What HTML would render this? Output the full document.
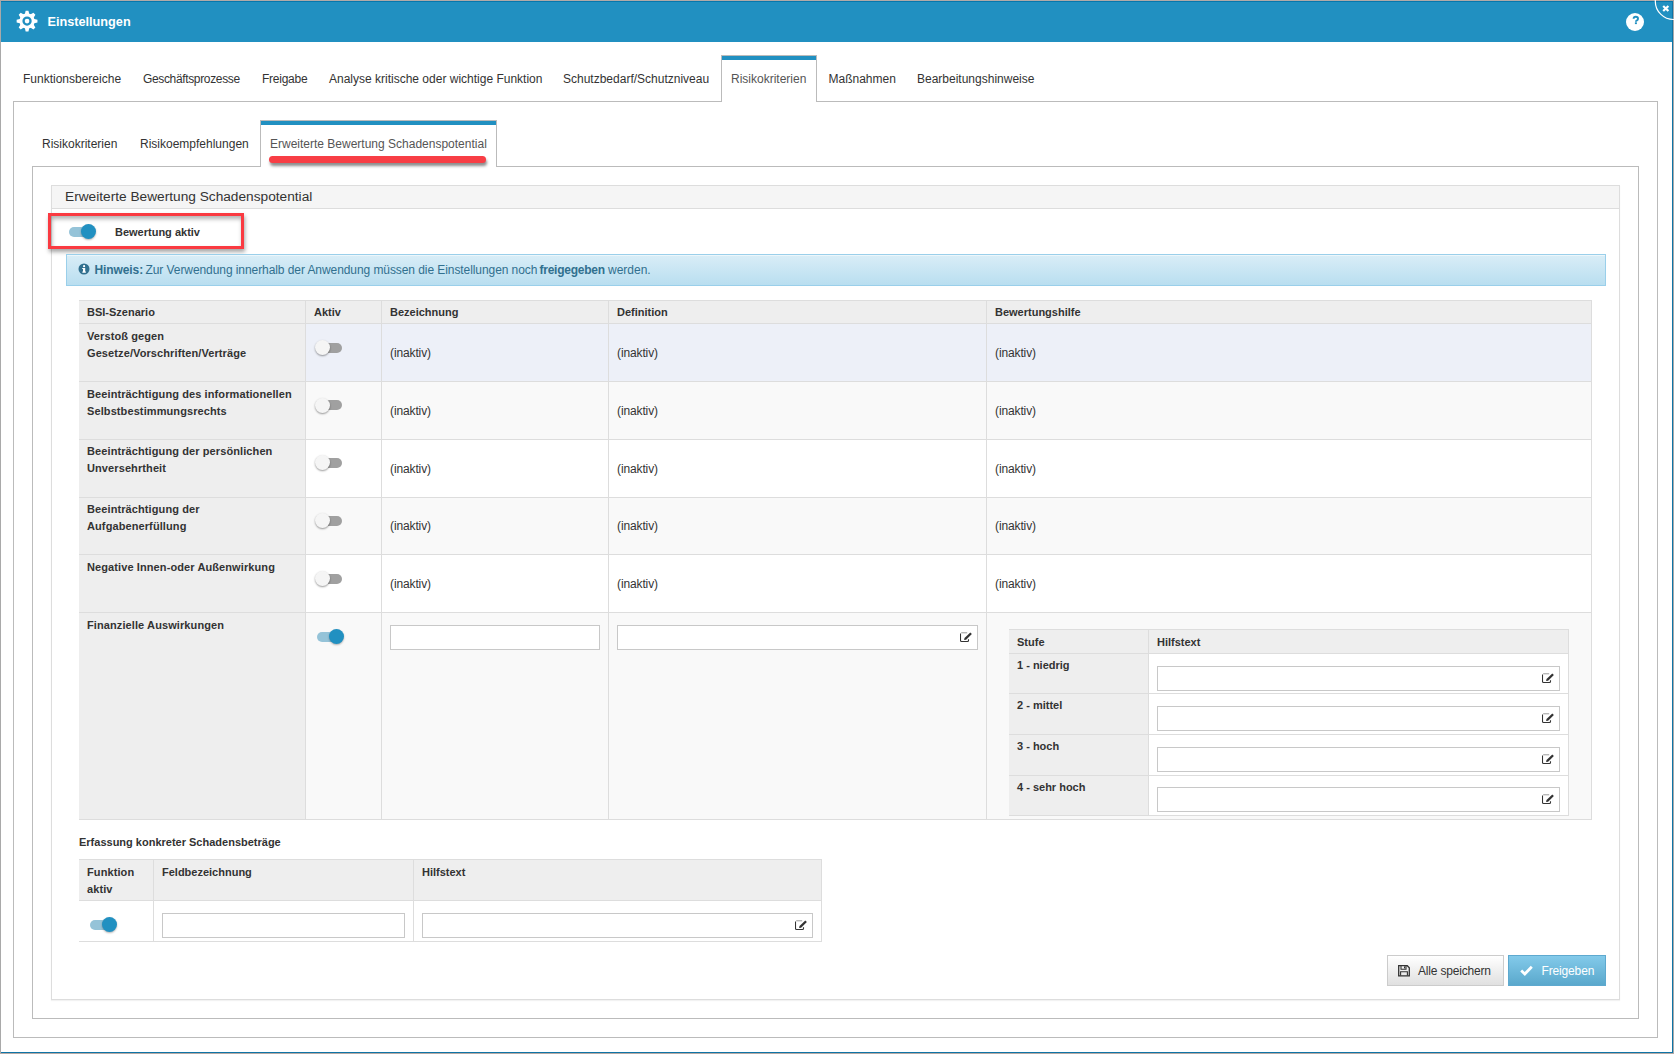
<!DOCTYPE html>
<html><head><meta charset="utf-8">
<style>
*{box-sizing:border-box;margin:0;padding:0}
html,body{width:1674px;height:1054px;overflow:hidden;background:#fff}
body{position:relative;font-family:"Liberation Sans",sans-serif;color:#333}
.a{position:absolute}
.t{position:absolute;white-space:nowrap;line-height:20px;font-size:12px}
.b{font-weight:700;font-size:11px}
.lh{line-height:17px}
.box{position:absolute;border:1px solid #bbb}
.inp{position:absolute;background:#fff;border:1px solid #c8c8c8}
.tg{position:absolute;width:30px;height:15px}
.tg .tr{position:absolute;left:3px;top:2.5px;width:24px;height:10px;border-radius:5px}
.tg .kn{position:absolute;top:0;width:15px;height:15px;border-radius:50%}
.tg.off .tr{background:#a0a0a0}
.tg.off .kn{left:0;background:#f5f5f5;box-shadow:0 1px 2px rgba(0,0,0,.4)}
.tg.on .tr{background:#95c3d8}
.tg.on .kn{left:15px;background:#2190c1;box-shadow:0 1px 2px rgba(0,0,0,.3)}
.ed{position:absolute;width:13px;height:11px}
</style></head><body>

<!-- window frame -->
<div class="a" style="left:0;top:0;width:1674px;height:1px;background:#b2aaa8"></div>
<div class="a" style="left:0;top:0;width:1px;height:1054px;background:#a9a9a9"></div>
<div class="a" style="left:1673px;top:0;width:1px;height:1054px;background:#a9a9a9"></div>
<div class="a" style="left:0;top:1053px;width:1674px;height:1px;background:#b4aaa6"></div>
<div class="a" style="left:1px;top:1px;width:1672px;height:41px;background:#2190c1"></div>
<div class="a" style="left:1px;top:1px;width:1672px;height:1px;background:#0777ac"></div>
<div class="a" style="left:1672px;top:1px;width:1px;height:1052px;background:#0f74a6"></div>
<div class="a" style="left:1px;top:1052px;width:1672px;height:1px;background:#0f74a6"></div>

<!-- header -->
<svg class="a" style="left:14px;top:8px" width="26" height="26" viewBox="0 0 26 26">
 <g transform="translate(13.05,13.05)">
  <path d="M-2.15 -7.30 L-1.40 -10.40 L1.40 -10.40 L2.15 -7.30 L3.64 -6.68 L6.36 -8.34 L8.34 -6.36 L6.68 -3.64 L7.30 -2.15 L10.40 -1.40 L10.40 1.40 L7.30 2.15 L6.68 3.64 L8.34 6.36 L6.36 8.34 L3.64 6.68 L2.15 7.30 L1.40 10.40 L-1.40 10.40 L-2.15 7.30 L-3.64 6.68 L-6.36 8.34 L-8.34 6.36 L-6.68 3.64 L-7.30 2.15 L-10.40 1.40 L-10.40 -1.40 L-7.30 -2.15 L-6.68 -3.64 L-8.34 -6.36 L-6.36 -8.34 L-3.64 -6.68Z" fill="#fff"/>
  <circle r="7.5" fill="#fff"/>
  <circle r="3.5" fill="none" stroke="#2190c1" stroke-width="2.3"/>
 </g>
</svg>
<div class="t" style="left:47.5px;top:12px;color:#fff;font-weight:700;font-size:12.7px">Einstellungen</div>
<div class="a" style="left:1626px;top:12.5px;width:18px;height:18px;border-radius:50%;background:#fff"></div>
<svg class="a" style="left:1630px;top:14px" width="12" height="12" viewBox="0 0 12 12"><path d="M3.6 4.8 Q3.6 2.8 5.8 2.8 Q8 2.8 8 4.7 Q8 5.7 6.9 6.3 Q5.9 6.8 5.9 7.7" fill="none" stroke="#2190c1" stroke-width="1.9"/><rect x="4.9" y="8.3" width="2" height="1.8" fill="#2190c1"/></svg>
<svg class="a" style="left:1650px;top:0" width="24" height="24" viewBox="0 0 24 24">
 <circle cx="23.6" cy="1.2" r="18.3" fill="none" stroke="#fff" stroke-width="1.2"/>
 <path d="M13.2 6 L18.4 11 M18.4 6 L13.2 11" stroke="#fff" stroke-width="2.2"/>
</svg>

<!-- level 1 tabs -->
<div class="box" style="left:13px;top:101px;width:1645px;height:937px"></div>
<div class="a" style="left:721px;top:55px;width:96px;height:47px;background:#fff;border:1px solid #bbb;border-bottom:none"></div>
<div class="a" style="left:722px;top:56px;width:94px;height:4px;background:#2190c1"></div>
<div class="t" style="left:23px;top:69px">Funktionsbereiche</div>
<div class="t" style="left:143px;top:69px;letter-spacing:-0.35px">Geschäftsprozesse</div>
<div class="t" style="left:262px;top:69px;letter-spacing:-0.25px">Freigabe</div>
<div class="t" style="left:329px;top:69px">Analyse kritische oder wichtige Funktion</div>
<div class="t" style="left:563px;top:69px">Schutzbedarf/Schutzniveau</div>
<div class="t" style="left:731px;top:69px;color:#555">Risikokriterien</div>
<div class="t" style="left:828.5px;top:69px">Maßnahmen</div>
<div class="t" style="left:917px;top:69px">Bearbeitungshinweise</div>

<!-- level 2 tabs -->
<div class="box" style="left:32px;top:166px;width:1607px;height:853px"></div>
<div class="a" style="left:260px;top:120px;width:237px;height:47px;background:#fff;border:1px solid #bbb;border-bottom:none"></div>
<div class="a" style="left:261px;top:121px;width:235px;height:4px;background:#2190c1"></div>
<div class="t" style="left:42px;top:134px">Risikokriterien</div>
<div class="t" style="left:140px;top:134px">Risikoempfehlungen</div>
<div class="t" style="left:270px;top:134px;color:#555">Erweiterte Bewertung Schadenspotential</div>
<div class="a" style="left:269px;top:156px;width:217px;height:7px;border-radius:4px;background:#f83e45;box-shadow:1px 3px 3px rgba(0,0,0,.45)"></div>

<!-- inner panel -->
<div class="a" style="left:51px;top:185px;width:1569px;height:815px;border:1px solid #ddd;box-shadow:0 1px 1px rgba(0,0,0,.05)"></div>
<div class="a" style="left:52px;top:186px;width:1567px;height:23px;background:#f5f5f5;border-bottom:1px solid #ddd"></div>
<div class="t" style="left:65px;top:187px;font-size:13.7px">Erweiterte Bewertung Schadenspotential</div>

<!-- red box -->
<div class="a" style="left:48px;top:213px;width:196px;height:36px;border:3px solid #fa3a41;box-shadow:1px 3px 4px rgba(0,0,0,.35), inset 1px 3px 4px rgba(0,0,0,.3)"></div>
<div class="tg on" style="left:65.5px;top:224px"><div class="tr"></div><div class="kn"></div></div>
<div class="t b" style="left:115px;top:222px">Bewertung aktiv</div>

<!-- alert -->
<div class="a" style="left:66px;top:254px;width:1540px;height:32px;border:1px solid #9acfea;background:linear-gradient(#d9edf7,#b9def0);box-shadow:inset 0 1px 0 rgba(255,255,255,.5)"></div>
<svg class="a" style="left:78px;top:263px" width="12" height="12" viewBox="0 0 12 12">
 <circle cx="6" cy="6" r="5.5" fill="#31708f"/>
 <rect x="5" y="5" width="2.2" height="4.4" fill="#fff"/>
 <rect x="4.2" y="5" width="1.2" height="1" fill="#fff"/>
 <rect x="4.2" y="8.6" width="3.8" height="1" fill="#fff"/>
 <circle cx="6.1" cy="3.2" r="1.1" fill="#fff"/>
</svg>
<div class="t b" style="left:94.5px;top:260px;color:#31708f;font-size:12px;letter-spacing:-0.1px">Hinweis:</div>
<div class="t" style="left:145.5px;top:260px;color:#31708f;letter-spacing:-0.075px">Zur Verwendung innerhalb der Anwendung müssen die Einstellungen noch</div>
<div class="t b" style="left:539.5px;top:260px;color:#31708f;font-size:12px;letter-spacing:-0.25px">freigegeben</div>
<div class="t" style="left:608px;top:260px;color:#31708f">werden.</div>


<!-- main table -->
<div class="a" style="left:79px;top:300px;width:1513px;height:24px;background:#eee"></div>
<div class="a" style="left:306px;top:324px;width:1285px;height:57px;background:#edf0f8"></div>
<div class="a" style="left:306px;top:382px;width:1285px;height:57px;background:#f9f9f9"></div>
<div class="a" style="left:306px;top:440px;width:1285px;height:57px;background:#fff"></div>
<div class="a" style="left:306px;top:498px;width:1285px;height:56px;background:#f9f9f9"></div>
<div class="a" style="left:306px;top:555px;width:1285px;height:57px;background:#fff"></div>
<div class="a" style="left:306px;top:613px;width:1285px;height:206px;background:#f9f9f9"></div>
<div class="a" style="left:79px;top:324px;width:226px;height:495px;background:#eee"></div>
<div class="a" style="left:79px;top:300px;width:1513px;height:1px;background:#ddd"></div>
<div class="a" style="left:79px;top:323px;width:1513px;height:1px;background:#ddd"></div>
<div class="a" style="left:79px;top:381px;width:1513px;height:1px;background:#ddd"></div>
<div class="a" style="left:79px;top:439px;width:1513px;height:1px;background:#ddd"></div>
<div class="a" style="left:79px;top:497px;width:1513px;height:1px;background:#ddd"></div>
<div class="a" style="left:79px;top:554px;width:1513px;height:1px;background:#ddd"></div>
<div class="a" style="left:79px;top:612px;width:1513px;height:1px;background:#ddd"></div>
<div class="a" style="left:79px;top:819px;width:1513px;height:1px;background:#ddd"></div>
<div class="a" style="left:305px;top:300px;width:1px;height:520px;background:#ddd"></div>
<div class="a" style="left:381px;top:300px;width:1px;height:520px;background:#ddd"></div>
<div class="a" style="left:608px;top:300px;width:1px;height:520px;background:#ddd"></div>
<div class="a" style="left:986px;top:300px;width:1px;height:520px;background:#ddd"></div>
<div class="a" style="left:1591px;top:300px;width:1px;height:520px;background:#ddd"></div>
<div class="t b" style="left:87px;top:302px">BSI-Szenario</div>
<div class="t b" style="left:314px;top:302px">Aktiv</div>
<div class="t b" style="left:390px;top:302px">Bezeichnung</div>
<div class="t b" style="left:617px;top:302px">Definition</div>
<div class="t b" style="left:995px;top:302px">Bewertungshilfe</div>
<div class="t b lh" style="letter-spacing:0.1px;left:87px;top:328px">Verstoß gegen<br>Gesetze/Vorschriften/Verträge</div>
<div class="t b lh" style="letter-spacing:0.1px;left:87px;top:386px">Beeinträchtigung des informationellen<br>Selbstbestimmungsrechts</div>
<div class="t b lh" style="letter-spacing:0.1px;left:87px;top:443px">Beeinträchtigung der persönlichen<br>Unversehrtheit</div>
<div class="t b lh" style="letter-spacing:0.1px;left:87px;top:501px">Beeinträchtigung der<br>Aufgabenerfüllung</div>
<div class="t b lh" style="letter-spacing:0.1px;left:87px;top:559px">Negative Innen-oder Außenwirkung</div>
<div class="t b lh" style="letter-spacing:0.1px;left:87px;top:617px">Finanzielle Auswirkungen</div>
<div class="tg off" style="left:314.7px;top:340.1px"><div class="tr"></div><div class="kn"></div></div>
<div class="t" style="left:390px;top:343px;letter-spacing:-0.12px">(inaktiv)</div>
<div class="t" style="left:617px;top:343px;letter-spacing:-0.12px">(inaktiv)</div>
<div class="t" style="left:995px;top:343px;letter-spacing:-0.12px">(inaktiv)</div>
<div class="tg off" style="left:314.7px;top:397.6px"><div class="tr"></div><div class="kn"></div></div>
<div class="t" style="left:390px;top:401px;letter-spacing:-0.12px">(inaktiv)</div>
<div class="t" style="left:617px;top:401px;letter-spacing:-0.12px">(inaktiv)</div>
<div class="t" style="left:995px;top:401px;letter-spacing:-0.12px">(inaktiv)</div>
<div class="tg off" style="left:314.7px;top:455.3px"><div class="tr"></div><div class="kn"></div></div>
<div class="t" style="left:390px;top:459px;letter-spacing:-0.12px">(inaktiv)</div>
<div class="t" style="left:617px;top:459px;letter-spacing:-0.12px">(inaktiv)</div>
<div class="t" style="left:995px;top:459px;letter-spacing:-0.12px">(inaktiv)</div>
<div class="tg off" style="left:314.7px;top:513.4px"><div class="tr"></div><div class="kn"></div></div>
<div class="t" style="left:390px;top:516px;letter-spacing:-0.12px">(inaktiv)</div>
<div class="t" style="left:617px;top:516px;letter-spacing:-0.12px">(inaktiv)</div>
<div class="t" style="left:995px;top:516px;letter-spacing:-0.12px">(inaktiv)</div>
<div class="tg off" style="left:314.7px;top:571px"><div class="tr"></div><div class="kn"></div></div>
<div class="t" style="left:390px;top:574px;letter-spacing:-0.12px">(inaktiv)</div>
<div class="t" style="left:617px;top:574px;letter-spacing:-0.12px">(inaktiv)</div>
<div class="t" style="left:995px;top:574px;letter-spacing:-0.12px">(inaktiv)</div>
<div class="tg on" style="left:313.8px;top:629.2px"><div class="tr"></div><div class="kn"></div></div>
<div class="inp" style="left:390px;top:625px;width:210px;height:25px"></div>
<div class="inp" style="left:617px;top:625px;width:361px;height:25px"></div>
<svg class="ed" style="left:960px;top:632px" viewBox="0 0 13 11"><path d="M1.5 0.7 V0.7 M0.5 1.6 V8.5 Q0.5 9.5 1.5 9.5 H7.5 Q8.5 9.5 8.5 8.5 V7.2" fill="none" stroke="#333" stroke-width="1.1"/><path d="M1.2 0.8 H7.2" stroke="#999" stroke-width="1"/><path d="M4.1 7.9 L4.5 6.1 L10.3 0.5 L11.9 2.1 L6.1 7.7 Z" fill="#333"/></svg>
<div class="a" style="left:1009px;top:629px;width:560px;height:187px;background:#eee"></div>
<div class="a" style="left:1149px;top:654px;width:419px;height:39px;background:#fff"></div>
<div class="a" style="left:1149px;top:694px;width:419px;height:40px;background:#fff"></div>
<div class="a" style="left:1149px;top:735px;width:419px;height:40px;background:#fff"></div>
<div class="a" style="left:1149px;top:776px;width:419px;height:39px;background:#fff"></div>
<div class="a" style="left:1009px;top:629px;width:560px;height:1px;background:#ddd"></div>
<div class="a" style="left:1009px;top:653px;width:560px;height:1px;background:#ddd"></div>
<div class="a" style="left:1009px;top:693px;width:560px;height:1px;background:#ddd"></div>
<div class="a" style="left:1009px;top:734px;width:560px;height:1px;background:#ddd"></div>
<div class="a" style="left:1009px;top:775px;width:560px;height:1px;background:#ddd"></div>
<div class="a" style="left:1009px;top:815px;width:560px;height:1px;background:#ddd"></div>
<div class="a" style="left:1148px;top:629px;width:1px;height:187px;background:#ddd"></div>
<div class="a" style="left:1568px;top:629px;width:1px;height:187px;background:#ddd"></div>
<div class="t b" style="left:1017px;top:632px">Stufe</div>
<div class="t b" style="left:1157px;top:632px">Hilfstext</div>
<div class="t b" style="left:1017px;top:655px">1 - niedrig</div>
<div class="inp" style="left:1157px;top:666px;width:403px;height:25px"></div>
<svg class="ed" style="left:1542px;top:673px" viewBox="0 0 13 11"><path d="M1.5 0.7 V0.7 M0.5 1.6 V8.5 Q0.5 9.5 1.5 9.5 H7.5 Q8.5 9.5 8.5 8.5 V7.2" fill="none" stroke="#333" stroke-width="1.1"/><path d="M1.2 0.8 H7.2" stroke="#999" stroke-width="1"/><path d="M4.1 7.9 L4.5 6.1 L10.3 0.5 L11.9 2.1 L6.1 7.7 Z" fill="#333"/></svg>
<div class="t b" style="left:1017px;top:695px">2 - mittel</div>
<div class="inp" style="left:1157px;top:706px;width:403px;height:25px"></div>
<svg class="ed" style="left:1542px;top:713px" viewBox="0 0 13 11"><path d="M1.5 0.7 V0.7 M0.5 1.6 V8.5 Q0.5 9.5 1.5 9.5 H7.5 Q8.5 9.5 8.5 8.5 V7.2" fill="none" stroke="#333" stroke-width="1.1"/><path d="M1.2 0.8 H7.2" stroke="#999" stroke-width="1"/><path d="M4.1 7.9 L4.5 6.1 L10.3 0.5 L11.9 2.1 L6.1 7.7 Z" fill="#333"/></svg>
<div class="t b" style="left:1017px;top:736px">3 - hoch</div>
<div class="inp" style="left:1157px;top:747px;width:403px;height:25px"></div>
<svg class="ed" style="left:1542px;top:754px" viewBox="0 0 13 11"><path d="M1.5 0.7 V0.7 M0.5 1.6 V8.5 Q0.5 9.5 1.5 9.5 H7.5 Q8.5 9.5 8.5 8.5 V7.2" fill="none" stroke="#333" stroke-width="1.1"/><path d="M1.2 0.8 H7.2" stroke="#999" stroke-width="1"/><path d="M4.1 7.9 L4.5 6.1 L10.3 0.5 L11.9 2.1 L6.1 7.7 Z" fill="#333"/></svg>
<div class="t b" style="left:1017px;top:777px">4 - sehr hoch</div>
<div class="inp" style="left:1157px;top:787px;width:403px;height:25px"></div>
<svg class="ed" style="left:1542px;top:794px" viewBox="0 0 13 11"><path d="M1.5 0.7 V0.7 M0.5 1.6 V8.5 Q0.5 9.5 1.5 9.5 H7.5 Q8.5 9.5 8.5 8.5 V7.2" fill="none" stroke="#333" stroke-width="1.1"/><path d="M1.2 0.8 H7.2" stroke="#999" stroke-width="1"/><path d="M4.1 7.9 L4.5 6.1 L10.3 0.5 L11.9 2.1 L6.1 7.7 Z" fill="#333"/></svg>

<!-- bottom table -->
<div class="t b" style="left:79px;top:832px">Erfassung konkreter Schadensbeträge</div>
<div class="a" style="left:79px;top:859px;width:743px;height:42px;background:#eee"></div>
<div class="a" style="left:79px;top:859px;width:743px;height:1px;background:#ddd"></div>
<div class="a" style="left:79px;top:900px;width:743px;height:1px;background:#ddd"></div>
<div class="a" style="left:79px;top:941px;width:743px;height:1px;background:#ddd"></div>
<div class="a" style="left:153px;top:859px;width:1px;height:83px;background:#ddd"></div>
<div class="a" style="left:413px;top:859px;width:1px;height:83px;background:#ddd"></div>
<div class="a" style="left:821px;top:859px;width:1px;height:83px;background:#ddd"></div>
<div class="t b lh" style="letter-spacing:0.1px;left:87px;top:864px">Funktion<br>aktiv</div>
<div class="t b" style="left:162px;top:862px">Feldbezeichnung</div>
<div class="t b" style="left:422px;top:862px">Hilfstext</div>
<div class="tg on" style="left:87px;top:917.2px"><div class="tr"></div><div class="kn"></div></div>
<div class="inp" style="left:162px;top:913px;width:243px;height:25px"></div>
<div class="inp" style="left:422px;top:913px;width:391px;height:25px"></div>
<svg class="ed" style="left:795px;top:920px" viewBox="0 0 13 11"><path d="M1.5 0.7 V0.7 M0.5 1.6 V8.5 Q0.5 9.5 1.5 9.5 H7.5 Q8.5 9.5 8.5 8.5 V7.2" fill="none" stroke="#333" stroke-width="1.1"/><path d="M1.2 0.8 H7.2" stroke="#999" stroke-width="1"/><path d="M4.1 7.9 L4.5 6.1 L10.3 0.5 L11.9 2.1 L6.1 7.7 Z" fill="#333"/></svg>

<!-- buttons -->
<div class="a" style="left:1387px;top:955px;width:117px;height:31px;border:1px solid #ccc;background:linear-gradient(#fff,#e0e0e0)"></div>
<svg class="a" style="left:1398px;top:965px" width="12" height="12" viewBox="0 0 12 12"><path d="M0.7 0.7 H9.3 L11.3 2.7 V10.8 H0.7 Z" fill="none" stroke="#333" stroke-width="1.3"/><path d="M3 1 V4.2 H8 V1" fill="none" stroke="#333" stroke-width="1.1"/><rect x="6" y="1.4" width="1.2" height="2" fill="#333"/><path d="M2.6 10.6 V6.8 H9.4 V10.6" fill="none" stroke="#333" stroke-width="1.1"/></svg>
<div class="t" style="left:1418px;top:961px;letter-spacing:-0.18px">Alle speichern</div>
<div class="a" style="left:1508px;top:955px;width:98px;height:31px;border:1px solid #5ea9cf;background:linear-gradient(#83caea,#5aa8cc)"></div>
<svg class="a" style="left:1520px;top:965px" width="13" height="11" viewBox="0 0 13 11"><path d="M1.2 5.6 L4.8 9 L11.8 1.8" fill="none" stroke="#fff" stroke-width="2.8"/></svg>
<div class="t" style="left:1541.5px;top:961px;color:#fff;letter-spacing:-0.15px">Freigeben</div>

</body></html>
